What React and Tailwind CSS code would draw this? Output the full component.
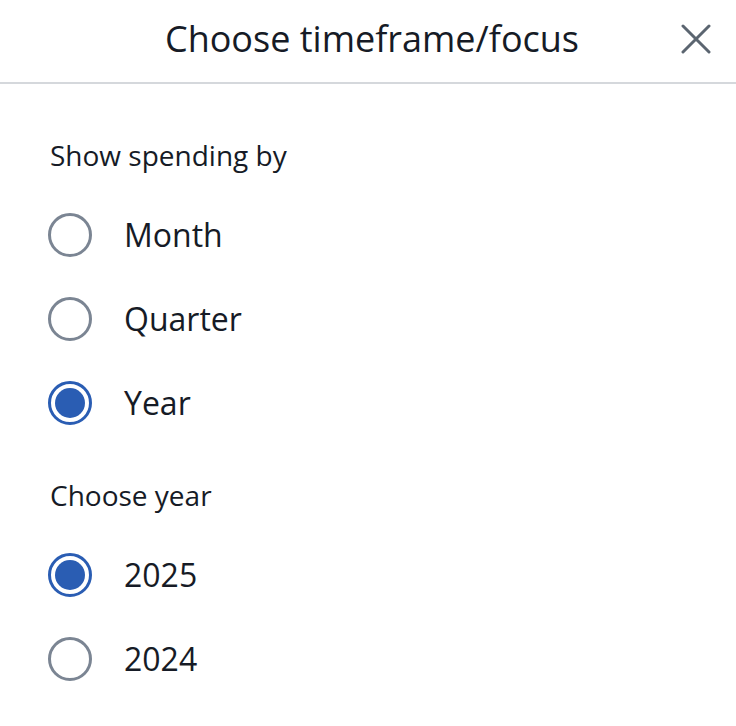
import React, { useState } from 'react';

const SPENDING = ['Month', 'Quarter', 'Year'];
const YEARS = ['2025', '2024'];

function Radio({ label, checked, onSelect }) {
  return (
    <button
      type="button"
      onClick={onSelect}
      className="flex items-center h-[84px] w-full text-left"
    >
      <span
        className={`w-[44px] h-[44px] rounded-full border-[3px] flex items-center justify-center shrink-0 ${
          checked ? 'border-[#2a5db3]' : 'border-[#7b8593]'
        }`}
      >
        {checked && <span className="w-[30px] h-[30px] rounded-full bg-[#2a5db3]"></span>}
      </span>
      <span className="ml-[32px] text-[32px] leading-[42px] text-[#161b26]">{label}</span>
    </button>
  );
}

export default function App() {
  const [periodo, setPeriodo] = useState('Year');
  const [anio, setAnio] = useState('2025');

  return (
    <div
      className="w-[736px] min-h-[726px] bg-white"
      style={{ fontFamily: '"Open Sans", "Noto Sans", sans-serif' }}
    >
      {/* Cabecera */}
      <div className="h-[84px] border-b-2 border-[#d5d8dc] grid grid-cols-[1fr_auto_1fr] items-center">
        <div></div>
        <h1 className="text-[36px] leading-[44px] text-[#161b26] pb-[4px] pl-[8px]">Choose timeframe/focus</h1>
        <div className="flex justify-end pr-[20px]">
          <button type="button" className="w-[40px] h-[40px] flex items-center justify-center text-[#5b6570] mb-[4px]">
            <svg width="30" height="30" viewBox="0 0 30 30" fill="none" stroke="currentColor" strokeWidth="3" strokeLinecap="round">
              <path d="M2 2L28 28M28 2L2 28" />
            </svg>
          </button>
        </div>
      </div>

      <div className="px-[48px]">
        <p className="pt-[51px] text-[28px] leading-[40px] text-[#161b26] pl-[2px]">Show spending by</p>
        <div className="mt-[18px]">
          {SPENDING.map(op => (
            <Radio key={op} label={op} checked={periodo === op} onSelect={() => setPeriodo(op)} />
          ))}
        </div>

        <p className="mt-[30px] text-[28px] leading-[40px] text-[#161b26] pl-[2px]">Choose year</p>
        <div className="mt-[18px]">
          {YEARS.map(y => (
            <Radio key={y} label={y} checked={anio === y} onSelect={() => setAnio(y)} />
          ))}
        </div>
      </div>
    </div>
  );
}
